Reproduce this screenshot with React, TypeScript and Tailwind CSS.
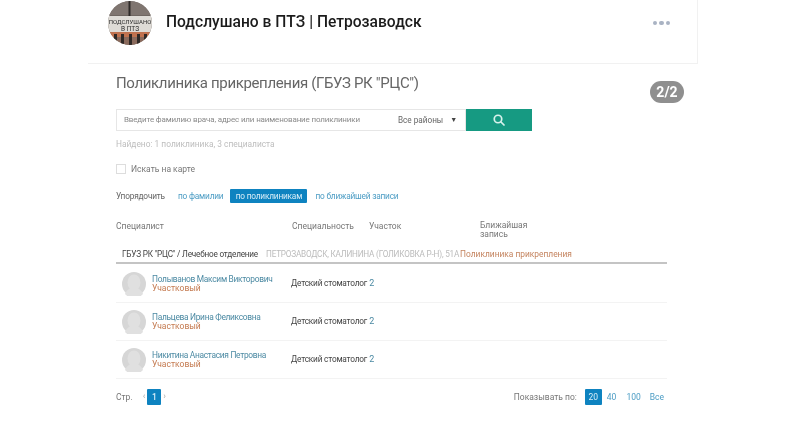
import React from "react";

function Avatar() {
  return (
    <svg width="44" height="44" viewBox="0 0 44 44" className="shrink-0">
      <defs>
        <clipPath id="c"><circle cx="22" cy="22" r="22" /></clipPath>
      </defs>
      <g clipPath="url(#c)">
        <rect width="44" height="44" fill="#6f6661" />
        <rect y="0" width="44" height="14" fill="#7f7570" />
        <rect x="20.5" y="0" width="2" height="15" fill="#2e2a28" />
        <rect y="15" width="44" height="16" fill="#dedbd6" />
        <rect y="31" width="44" height="5" fill="#c0724f" />
        <rect y="36" width="44" height="8" fill="#8a6a5c" />
        <rect x="6" y="33" width="3" height="11" fill="#2f2926" />
        <rect x="13" y="33" width="3" height="11" fill="#2f2926" />
        <rect x="21" y="33" width="3" height="11" fill="#2f2926" />
        <rect x="29" y="33" width="3" height="11" fill="#2f2926" />
        <rect x="36" y="33" width="3" height="11" fill="#2f2926" />
        <text x="22" y="22.5" textAnchor="middle" fontSize="6" fontFamily="Roboto, sans-serif" fill="#2b2b2b">ПОДСЛУШАНО</text>
        <text x="22" y="29.5" textAnchor="middle" fontSize="6.5" fontFamily="Roboto, sans-serif" fill="#2b2b2b">В ПТЗ</text>
      </g>
    </svg>
  );
}

function Person() {
  return (
    <svg width="24" height="24" viewBox="0 0 24 24" className="shrink-0">
      <circle cx="12" cy="12" r="12" fill="#d6d6d6" />
      <ellipse cx="12" cy="10.5" rx="6.5" ry="8" fill="#e0e0e0" />
      <path d="M3 22c2-5 5-6 9-6s7 1 9 6a12 12 0 0 1-18 0z" fill="#e0e0e0" />
    </svg>
  );
}

const rows = ["Полыванов Максим Викторович", "Пальцева Ирина Феликсовна", "Никитина Анастасия Петровна"];

export default function App() {
  return (
    <div className="relative w-[787px] h-[424px] overflow-hidden bg-white font-['Roboto',sans-serif] blur-[0.35px]">
      <div className="ml-[88px] w-[610px] h-[64px] border-r border-b border-[#f1f1f1] pl-[20px] pr-[27px] pt-px flex items-start">
        <Avatar />
        <div className="ml-[14px] h-[44px] flex items-center text-[15.6px] font-medium text-[#1b1b1b] whitespace-nowrap">
          Подслушано в ПТЗ | Петрозаводск
        </div>
        <div className="ml-auto h-[44px] flex items-center gap-[2px]">
          <span className="w-[4.5px] h-[4.5px] rounded-full bg-[#a9b3c3]" />
          <span className="w-[4.5px] h-[4.5px] rounded-full bg-[#a9b3c3]" />
          <span className="w-[4.5px] h-[4.5px] rounded-full bg-[#a9b3c3]" />
        </div>
      </div>

      <div className="absolute left-[650px] top-[81px] w-[34px] h-[22px] rounded-full bg-[#8f8f8f] text-white text-[14px] font-bold flex items-center justify-center">
        2/2
      </div>

      <div className="ml-[116px] w-[551px]">
        <h1 className="mt-[9px] h-[21px] leading-[21px] text-[15px] tracking-[-0.35px] text-[#666] whitespace-nowrap">
          Поликлиника прикрепления (ГБУЗ РК "РЦС")
        </h1>

        <div className="mt-[15px] w-[416px] h-[22px] flex items-stretch">
          <div className="flex-1 border border-[#e6e6e6] flex items-center pl-[7px] pr-[8px] text-[8px] tracking-[-0.15px] text-[#8a8a8a] whitespace-nowrap">
            <span>Введите фамилию врача, адрес или наименование поликлиники</span>
            <span className="ml-auto text-[8.2px] tracking-normal text-[#666]">Все районы</span>
            <span className="ml-[7px] text-[7px] text-[#444]">▼</span>
          </div>
          <div className="w-[66px] bg-[#169a82] flex items-center justify-center">
            <svg width="12" height="12" viewBox="0 0 24 24" fill="none" stroke="#d8f2ec" strokeWidth="3.4" strokeLinecap="round">
              <circle cx="10" cy="10" r="7.5" />
              <path d="M16 16l6 6" />
            </svg>
          </div>
        </div>

        <div className="mt-[8px] h-[11px] leading-[11px] text-[8.4px] text-[#bdbdbd]">Найдено: 1 поликлиника, 3 специалиста</div>

        <div className="mt-[14px] h-[10px] flex items-center">
          <span className="w-[10px] h-[10px] border border-[#ddd]" />
          <span className="ml-[5px] text-[8.5px] text-[#777]">Искать на карте</span>
        </div>

        <div className="mt-[15px] h-[14px] flex items-center text-[8.3px] tracking-[-0.2px] whitespace-nowrap">
          <span className="w-[62px] text-[#666]">Упорядочить</span>
          <span className="text-[#4b9cc4]">по фамилии</span>
          <span className="ml-[7px] h-[14px] w-[77px] flex items-center justify-center rounded-[1px] bg-[#0e83c0] text-[#d9eef8]">по поликлиникам</span>
          <span className="ml-[8px] text-[#4b9cc4]">по ближайшей записи</span>
        </div>

        <div className="mt-[18px] h-[20px] flex text-[8.5px] leading-[9px] text-[#777]">
          <div className="w-[176px] pt-[1px]">Специалист</div>
          <div className="w-[77px] pt-[1px]">Специальность</div>
          <div className="w-[111px] pt-[1px]">Участок</div>
          <div>Ближайшая<br />запись</div>
        </div>

        <div className="mt-[5px] h-[16px] flex items-center pl-[6px] border-b-2 border-[#c4c4c4] box-content text-[8.2px] tracking-[-0.2px] whitespace-nowrap">
          <span className="text-[#444]">ГБУЗ РК "РЦС" / Лечебное отделение</span>
          <span className="ml-[8px] text-[#bbb]">ПЕТРОЗАВОДСК, КАЛИНИНА (ГОЛИКОВКА Р-Н), 51А</span>
          <span className="ml-px text-[8.4px] tracking-normal text-[#c4835e]">Поликлиника прикрепления</span>
        </div>

        <div className="pt-px">
          {rows.map((name) => (
            <div key={name} className="h-[38px] border-b border-[#f3f3f3] pl-[6px] flex items-center">
              <Person />
              <div className="ml-[6px] w-[139px] leading-[9px] whitespace-nowrap">
                <div className="text-[8.4px] tracking-[-0.3px] text-[#4c8aa3]">{name}</div>
                <div className="text-[8.5px] text-[#c47a50]">Участковый</div>
              </div>
              <div className="text-[8.3px] tracking-[-0.2px] text-[#444] whitespace-nowrap">Детский стоматолог</div>
              <div className="ml-[2px] text-[9px] text-[#4c8aa3]">2</div>
            </div>
          ))}
        </div>

        <div className="mt-[10px] h-[16px] flex items-center text-[8.5px] text-[#777]">
          <span>Стр.</span>
          <span className="ml-[10px] text-[#aaa] text-[9px]">‹</span>
          <span className="ml-[2px] w-[14px] h-[16px] rounded-[1px] bg-[#0e83c0] text-[#d9eef8] font-medium flex items-center justify-center">1</span>
          <span className="ml-[2px] text-[#aaa] text-[9px]">›</span>
          <span className="ml-auto">Показывать по:</span>
          <span className="ml-[8px] w-[17px] h-[16px] rounded-[1px] bg-[#0e83c0] text-[#d9eef8] flex items-center justify-center">20</span>
          <span className="ml-[5px] text-[#4b9cc4]">40</span>
          <span className="ml-[10px] text-[#4b9cc4]">100</span>
          <span className="ml-[9px] mr-[3px] text-[#4b9cc4]">Все</span>
        </div>
      </div>
    </div>
  );
}
